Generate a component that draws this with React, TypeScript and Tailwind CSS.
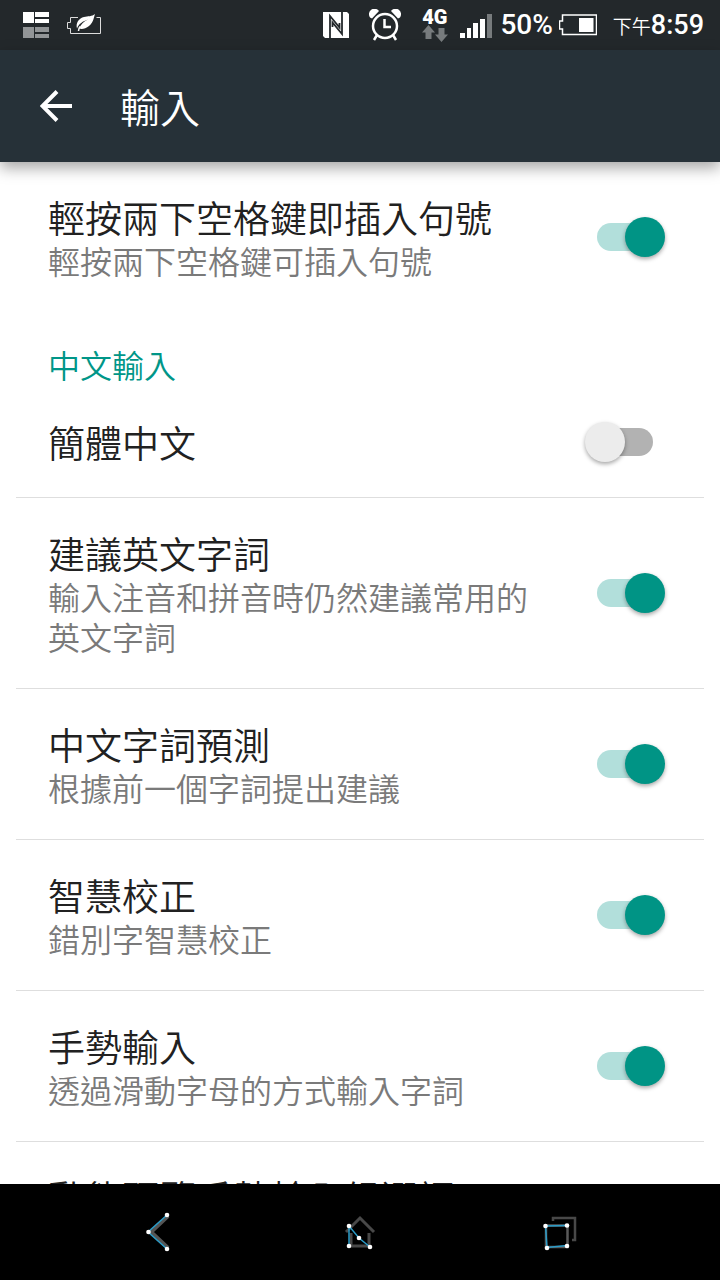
import { useState } from "react";

type Setting = {
  id: string;
  title: string;
  summary?: string;
  enabled: boolean;
};

const generalSettings: Setting[] = [
  {
    id: "double-space-period",
    title: "輕按兩下空格鍵即插入句號",
    summary: "輕按兩下空格鍵可插入句號",
    enabled: true,
  },
];

const chineseSettings: Setting[] = [
  { id: "simplified", title: "簡體中文", enabled: false },
  {
    id: "suggest-english",
    title: "建議英文字詞",
    summary: "輸入注音和拼音時仍然建議常用的英文字詞",
    enabled: true,
  },
  {
    id: "prediction",
    title: "中文字詞預測",
    summary: "根據前一個字詞提出建議",
    enabled: true,
  },
  {
    id: "correction",
    title: "智慧校正",
    summary: "錯別字智慧校正",
    enabled: true,
  },
  {
    id: "gesture",
    title: "手勢輸入",
    summary: "透過滑動字母的方式輸入字詞",
    enabled: true,
  },
  {
    id: "gesture-preview",
    title: "動態預覽手勢輸入候選詞",
    summary: "滑動時顯示候選詞",
    enabled: true,
  },
];

function StatusBar() {
  return (
    <div className="flex h-[50px] shrink-0 items-center justify-between bg-[#23282b] pr-4 pl-[23px] text-white">
      <div className="flex items-center gap-[18px]">
        <svg width="26" height="26" viewBox="0 0 26 26" fill="#fff">
          <path d="M0 0h11v11H0zM12 0h14v5H12zM12 7h14v4H12z" />
          <path d="M0 15h11v11H0zM12 15h14v5H12zM12 22h14v4H12z" fill="#929597" />
        </svg>
        <svg width="34" height="22" viewBox="0 0 34 22" fill="none">
          <path d="M11 3.5H3.5v5h-3v6h3v5h30v-16h-4" stroke="#dcdcdc" />
          <path
            d="M28 0c-1 2-1 8-6 12-3.500 3-7.500 3.500-10 2.500 2-4.500 5-7 9-9-5 1.500-9.500 4.500-11 9C8.500 9 12 4 17 3c4-.8 8-.5 11-3z"
            fill="#fff"
          />
          <path d="M11.500 17c0-2 .5-3 1.500-4.500" stroke="#fff" strokeWidth="1.500" />
        </svg>
      </div>

      <div className="flex items-center">
        <svg width="26" height="26" viewBox="0 0 26 26" className="mr-5">
          <path d="M0 0h24l2 2v24H2l-2-2z" fill="#fff" />
          <path
            d="M7 26V4l9.500 11.500V11M19 0v22L9.500 10.500V15"
            fill="none"
            stroke="#23282b"
            strokeWidth="1.800"
          />
        </svg>
        <svg width="32" height="32" viewBox="0 0 32 32" fill="none" className="mr-5">
          <path d="M1 8.500a5 5 0 0 1 9-6.500L3 9.500zM31 8.500A5 5 0 0 0 22 2l7 7.500z" fill="#fff" />
          <circle cx="16" cy="17" r="12" stroke="#fff" strokeWidth="2.500" />
          <path d="M15.500 10v8H22M8 26l-3 5M24 26l3 5" stroke="#fff" strokeWidth="2.500" />
        </svg>
        <div className="mr-3 flex w-[27px] flex-col items-center">
          <span className="font-[Roboto,sans-serif] text-xl leading-4 font-black">4G</span>
          <svg width="26" height="17" viewBox="0 0 26 17" fill="#777b7d">
            <path d="M6.500 0l6.500 7.500H9.500V14h-6V7.500H0zM19.500 17L13 9.500h3.500V3h6v6.500H26z" />
          </svg>
        </div>
        <svg width="32" height="24" viewBox="0 0 32 24" fill="#fff" className="mt-0.5 mr-2">
          <path d="M0 19h5v5H0zM7 14h4v10H7zM13 9h5v15h-5zM20 5h5v19h-5z" />
          <path d="M27 0h5v24h-5z" fill="#777b7d" />
        </svg>
        <span className="mr-[6px] font-[Roboto,sans-serif] text-[28px] leading-8 font-medium">
          50%
        </span>
        <svg width="38" height="22" viewBox="0 0 38 22" fill="none" className="mr-4">
          <path d="M3.500 1h34v19.500h-34V15h-3V7h3z" stroke="#fff" strokeWidth="1.500" />
          <path d="M20 4h14.500v14H20z" fill="#fff" />
        </svg>
        <span className="flex items-baseline">
          <span className="font-['Noto_Sans_CJK_TC',sans-serif] text-[19px] leading-8 font-[350]">
            下午
          </span>
          <span className="font-[Roboto,sans-serif] text-[27px] leading-8 font-medium">8:59</span>
        </span>
      </div>
    </div>
  );
}

function Toggle({ id, enabled }: { id: string; enabled: boolean }) {
  const [on, setOn] = useState(enabled);
  return (
    <span className="grid w-20 shrink-0 items-center">
      <input
        id={id}
        type="checkbox"
        role="switch"
        checked={on}
        onChange={(e) => setOn(e.target.checked)}
        className="peer col-start-1 row-start-1 h-7 w-14 cursor-pointer appearance-none justify-self-center rounded-full bg-[#b2b2b2] checked:bg-[#b2dfdb]"
      />
      <span className="pointer-events-none col-start-1 row-start-1 size-10 rounded-full bg-[#ececec] shadow-[0_2px_4px_rgba(0,0,0,0.35)] peer-checked:justify-self-end peer-checked:bg-[#009485]" />
    </span>
  );
}

function SettingRow({ setting, divider }: { setting: Setting; divider: boolean }) {
  return (
    <li
      className={`mx-4 flex items-center gap-8 py-8 pr-[39px] pl-8 ${
        divider ? "border-b border-[#dedede]" : ""
      }`}
    >
      <label htmlFor={setting.id} className="min-w-0 flex-1 cursor-pointer">
        <span className="block text-[37px] leading-[46px] text-[#212121]">{setting.title}</span>
        {setting.summary && (
          <span className="block text-[32px] leading-10 text-[#7a7a7a]">{setting.summary}</span>
        )}
      </label>
      <Toggle id={setting.id} enabled={setting.enabled} />
    </li>
  );
}

function NavBar() {
  return (
    <nav className="flex h-24 shrink-0 items-center justify-around bg-black px-[60px]">
      <button type="button" aria-label="返回" className="p-5">
        <svg width="40" height="40" viewBox="0 0 40 40" fill="none">
          <path d="M28 4L11 20l17 16" stroke="#555" strokeWidth="4" />
          <path d="M27 3L8 20l19 17" stroke="#2a9cc8" strokeWidth="1.500" />
          <g fill="#fff">
            <circle cx="27" cy="3" r="2.300" />
            <circle cx="8.500" cy="20" r="2.300" />
            <circle cx="27" cy="37" r="2.300" />
          </g>
        </svg>
      </button>
      <button type="button" aria-label="主畫面" className="p-5">
        <svg width="40" height="40" viewBox="0 0 40 40" fill="none">
          <path d="M6 20L20 6l14 14M11 21v13h18V21" stroke="#484848" strokeWidth="3" />
          <path d="M9 34V14l10 12 11 9" stroke="#2a9cc8" strokeWidth="1.500" />
          <g fill="#fff">
            <circle cx="9" cy="14" r="2.300" />
            <circle cx="9" cy="34" r="2.300" />
            <circle cx="19" cy="26" r="2.300" />
            <circle cx="30" cy="35" r="2.300" />
          </g>
        </svg>
      </button>
      <button type="button" aria-label="最近使用" className="p-5">
        <svg width="40" height="40" viewBox="0 0 40 40" fill="none">
          <path d="M13 9V6h22v22h-3" stroke="#484848" strokeWidth="2.500" />
          <path d="M6 13.500h21.500V35H6z" stroke="#5a5a5a" strokeWidth="2.500" />
          <path d="M27 13.500L5.500 14 7 35.500l20-2" stroke="#2a9cc8" strokeWidth="1.500" />
          <g fill="#fff">
            <circle cx="5.500" cy="14" r="2.300" />
            <circle cx="27" cy="13.500" r="2.300" />
            <circle cx="7" cy="36" r="2.300" />
            <circle cx="27" cy="34" r="2.300" />
          </g>
        </svg>
      </button>
    </nav>
  );
}

export default function App() {
  return (
    <div className="flex h-screen flex-col overflow-hidden bg-white font-['Noto_Sans_CJK_TC',sans-serif]">
      <StatusBar />

      <header className="z-10 flex h-28 shrink-0 items-center gap-12 bg-[#263138] pl-10 text-white shadow-[0_6px_14px_rgba(0,0,0,0.35)]">
        <button type="button" aria-label="向上瀏覽">
          <svg width="32" height="32" viewBox="0 0 32 32" fill="none" stroke="#fff" strokeWidth="4">
            <path d="M17 1.500L2.500 16 17 30.500M3 16h29" />
          </svg>
        </button>
        <h1 className="text-[40px] leading-[54px] font-[350]">輸入</h1>
      </header>

      <main className="min-h-0 flex-1 overflow-y-auto font-[350] [scrollbar-width:none]">
        <ul>
          {generalSettings.map((setting) => (
            <SettingRow key={setting.id} setting={setting} divider={false} />
          ))}
        </ul>

        <h2 className="px-12 pt-8 pb-[3px] text-[32px] leading-10 text-[#009688]">中文輸入</h2>
        <ul>
          {chineseSettings.map((setting) => (
            <SettingRow key={setting.id} setting={setting} divider />
          ))}
        </ul>
      </main>

      <NavBar />
    </div>
  );
}
